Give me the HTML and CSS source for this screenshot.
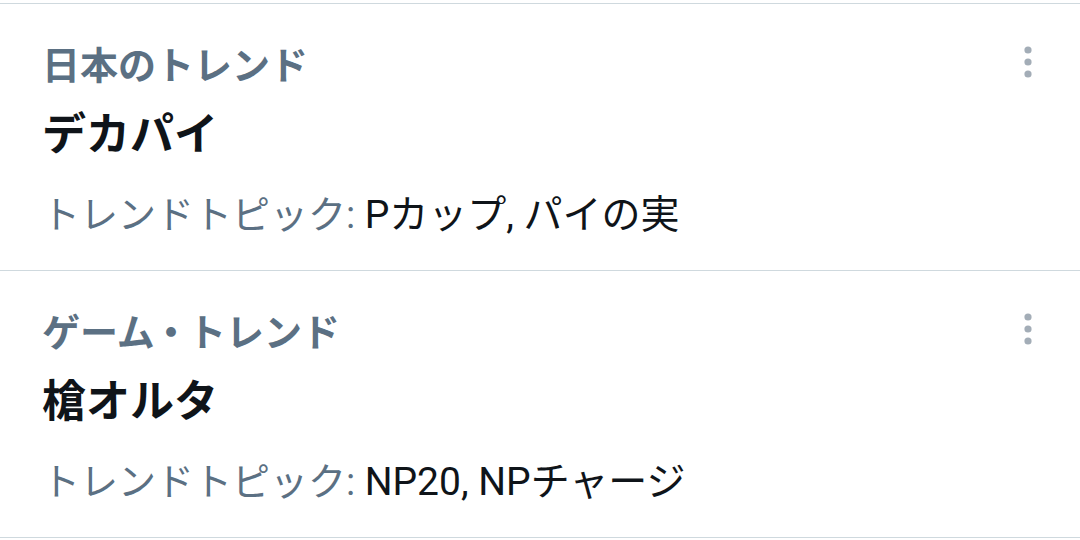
FILE: index.html
```html
<!DOCTYPE html>
<html lang="ja">
<head>
<meta charset="utf-8">
<link rel="stylesheet" href="styles.css">
</head>
<body>
<div class="list">
  <div class="item">
    <div class="content">
      <div class="label">日本のトレンド</div>
      <div class="title">デカパイ</div>
      <div class="topics"><span class="prefix">トレンドトピック: </span><span class="names">Pカップ, パイの実</span></div>
    </div>
    <svg class="more" width="20" height="40" viewBox="0 0 20 40" aria-hidden="true">
      <circle cx="10" cy="8" r="3.6"/>
      <circle cx="10" cy="20" r="3.6"/>
      <circle cx="10" cy="32" r="3.6"/>
    </svg>
  </div>
  <div class="item">
    <div class="content">
      <div class="label">ゲーム<span class="sep">・</span>トレンド</div>
      <div class="title">槍オルタ</div>
      <div class="topics"><span class="prefix">トレンドトピック: </span><span class="names">NP20, NPチャージ</span></div>
    </div>
    <svg class="more" width="20" height="40" viewBox="0 0 20 40" aria-hidden="true">
      <circle cx="10" cy="8" r="3.6"/>
      <circle cx="10" cy="20" r="3.6"/>
      <circle cx="10" cy="32" r="3.6"/>
    </svg>
  </div>
</div>
</body>
</html>
```
FILE: styles.css
```css
html, body {
  margin: 0;
  padding: 0;
  background: #ffffff;
}
body {
  padding-top: 3px;
  font-family: Roboto, "Noto Sans CJK JP", sans-serif;
  color: #0f1419;
}
.list {
  border-top: 1px solid #cfd9de;
}
.item {
  display: flex;
  align-items: flex-start;
  height: 266px;
  border-bottom: 1px solid #cfd9de;
  padding: 0 42px 0 42px;
}
.content {
  flex: 1;
  padding-top: 38px;
}
.label {
  font-size: 38px;
  font-weight: 700;
  color: #5b7083;
  line-height: 48px;
}
.sep {
  margin: 0 -2px 0 -3px;
}
.title {
  font-size: 44px;
  font-weight: 700;
  color: #0f1419;
  line-height: 56px;
  margin-top: 17px;
}
.topics {
  font-size: 38px;
  line-height: 48px;
  margin-top: 28px;
}
.prefix {
  color: #5b7083;
}
.names {
  color: #0f1419;
  font-size: 39px;
}
.more {
  fill: #a3adb7;
  margin-top: 38px;
}
```
